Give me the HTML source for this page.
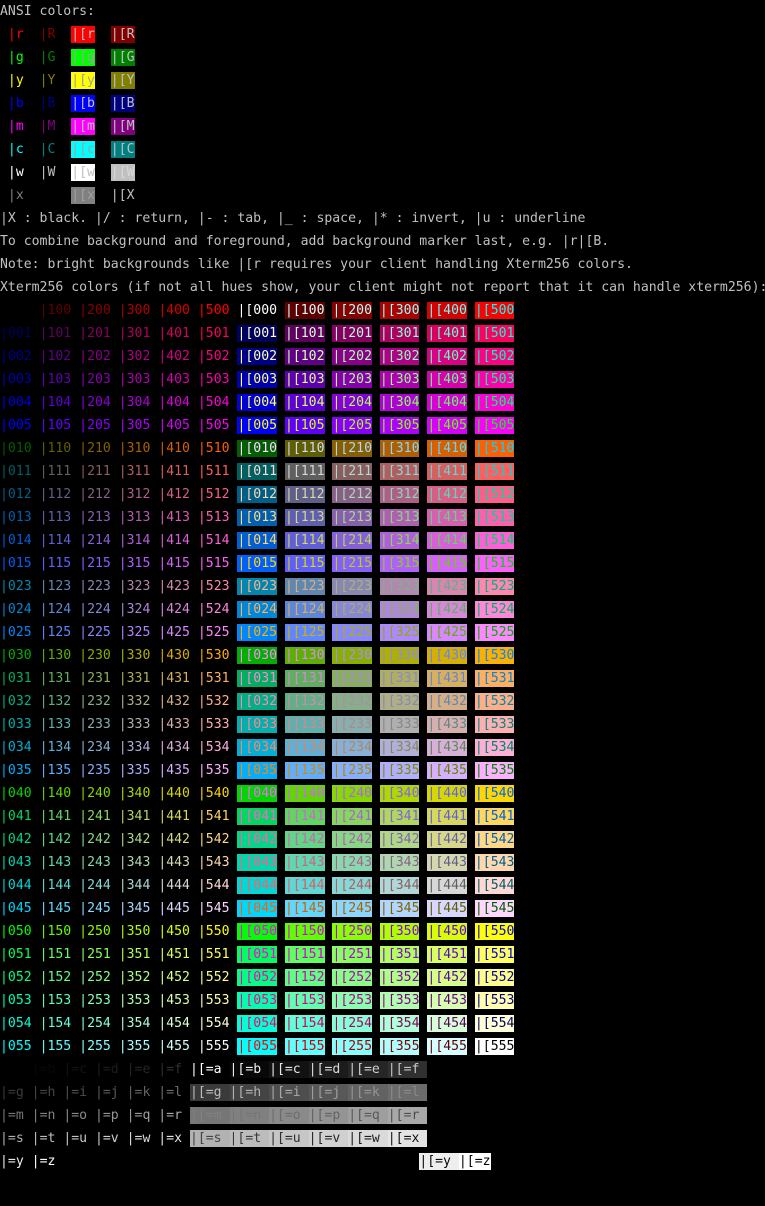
<!DOCTYPE html>
<html><head><meta charset="utf-8"><style>
html,body{margin:0;padding:0;background:#000;}
body{width:765px;height:1206px;overflow:hidden;font-family:"DejaVu Sans Mono","Liberation Mono",monospace;font-size:13.15px;color:#c0c0c0;}
div{height:23px;line-height:23px;white-space:pre;}
i{font-style:normal;}
b{font-weight:normal;display:inline-block;line-height:17px;height:17px;vertical-align:middle;}
</style></head><body>
<div>ANSI colors:</div>
<div> <i style="color:#ff0000">|r</i>  <i style="color:#800000">|R</i>  <b style="background:#ff0000;color:#c0c0c0">|[r</b>  <b style="background:#800000;color:#c0c0c0">|[R</b></div>
<div> <i style="color:#00ff00">|g</i>  <i style="color:#008000">|G</i>  <b style="background:#00ff00;color:#a0a0a0">|[g</b>  <b style="background:#008000;color:#c0c0c0">|[G</b></div>
<div> <i style="color:#ffff00">|y</i>  <i style="color:#808000">|Y</i>  <b style="background:#ffff00;color:#a0a0a0">|[y</b>  <b style="background:#808000;color:#c0c0c0">|[Y</b></div>
<div> <i style="color:#0000ff">|b</i>  <i style="color:#000080">|B</i>  <b style="background:#0000ff;color:#c0c0c0">|[b</b>  <b style="background:#000080;color:#c0c0c0">|[B</b></div>
<div> <i style="color:#ff00ff">|m</i>  <i style="color:#800080">|M</i>  <b style="background:#ff00ff;color:#c0c0c0">|[m</b>  <b style="background:#800080;color:#c0c0c0">|[M</b></div>
<div> <i style="color:#00ffff">|c</i>  <i style="color:#008080">|C</i>  <b style="background:#00ffff;color:#a0a0a0">|[c</b>  <b style="background:#008080;color:#c0c0c0">|[C</b></div>
<div> <i style="color:#ffffff">|w</i>  <i style="color:#c0c0c0">|W</i>  <b style="background:#ffffff;color:#c0c0c0">|[w</b>  <b style="background:#c0c0c0;color:#d8d8d8">|[W</b></div>
<div> <i style="color:#808080">|x</i>      <b style="background:#808080;color:#a0a0a0">|[x</b>  <b style="background:#000000;color:#c0c0c0">|[X</b></div>
<div>|X : black. |/ : return, |- : tab, |_ : space, |* : invert, |u : underline</div>
<div>To combine background and foreground, add background marker last, e.g. |r|[B.</div>
<div>Note: bright backgrounds like |[r requires your client handling Xterm256 colors.</div>
<div>Xterm256 colors (if not all hues show, your client might not report that it can handle xterm256):</div>
<div><i style="color:#000000">|000</i> <i style="color:#5f0000">|100</i> <i style="color:#870000">|200</i> <i style="color:#af0000">|300</i> <i style="color:#d70000">|400</i> <i style="color:#ff0000">|500</i> <b style="background:#000000;color:#ffffff">|[000</b> <b style="background:#5f0000;color:#d7ffff">|[100</b> <b style="background:#870000;color:#afffff">|[200</b> <b style="background:#af0000;color:#87ffff">|[300</b> <b style="background:#d70000;color:#5fffff">|[400</b> <b style="background:#ff0000;color:#00ffff">|[500</b></div>
<div><i style="color:#00005f">|001</i> <i style="color:#5f005f">|101</i> <i style="color:#87005f">|201</i> <i style="color:#af005f">|301</i> <i style="color:#d7005f">|401</i> <i style="color:#ff005f">|501</i> <b style="background:#00005f;color:#ffffd7">|[001</b> <b style="background:#5f005f;color:#d7ffd7">|[101</b> <b style="background:#87005f;color:#afffd7">|[201</b> <b style="background:#af005f;color:#87ffd7">|[301</b> <b style="background:#d7005f;color:#5fffd7">|[401</b> <b style="background:#ff005f;color:#00ffd7">|[501</b></div>
<div><i style="color:#000087">|002</i> <i style="color:#5f0087">|102</i> <i style="color:#870087">|202</i> <i style="color:#af0087">|302</i> <i style="color:#d70087">|402</i> <i style="color:#ff0087">|502</i> <b style="background:#000087;color:#ffffaf">|[002</b> <b style="background:#5f0087;color:#d7ffaf">|[102</b> <b style="background:#870087;color:#afffaf">|[202</b> <b style="background:#af0087;color:#87ffaf">|[302</b> <b style="background:#d70087;color:#5fffaf">|[402</b> <b style="background:#ff0087;color:#00ffaf">|[502</b></div>
<div><i style="color:#0000af">|003</i> <i style="color:#5f00af">|103</i> <i style="color:#8700af">|203</i> <i style="color:#af00af">|303</i> <i style="color:#d700af">|403</i> <i style="color:#ff00af">|503</i> <b style="background:#0000af;color:#ffff87">|[003</b> <b style="background:#5f00af;color:#d7ff87">|[103</b> <b style="background:#8700af;color:#afff87">|[203</b> <b style="background:#af00af;color:#87ff87">|[303</b> <b style="background:#d700af;color:#5fff87">|[403</b> <b style="background:#ff00af;color:#00ff87">|[503</b></div>
<div><i style="color:#0000d7">|004</i> <i style="color:#5f00d7">|104</i> <i style="color:#8700d7">|204</i> <i style="color:#af00d7">|304</i> <i style="color:#d700d7">|404</i> <i style="color:#ff00d7">|504</i> <b style="background:#0000d7;color:#ffff5f">|[004</b> <b style="background:#5f00d7;color:#d7ff5f">|[104</b> <b style="background:#8700d7;color:#afff5f">|[204</b> <b style="background:#af00d7;color:#87ff5f">|[304</b> <b style="background:#d700d7;color:#5fff5f">|[404</b> <b style="background:#ff00d7;color:#00ff5f">|[504</b></div>
<div><i style="color:#0000ff">|005</i> <i style="color:#5f00ff">|105</i> <i style="color:#8700ff">|205</i> <i style="color:#af00ff">|305</i> <i style="color:#d700ff">|405</i> <i style="color:#ff00ff">|505</i> <b style="background:#0000ff;color:#ffff00">|[005</b> <b style="background:#5f00ff;color:#d7ff00">|[105</b> <b style="background:#8700ff;color:#afff00">|[205</b> <b style="background:#af00ff;color:#87ff00">|[305</b> <b style="background:#d700ff;color:#5fff00">|[405</b> <b style="background:#ff00ff;color:#00ff00">|[505</b></div>
<div><i style="color:#005f00">|010</i> <i style="color:#5f5f00">|110</i> <i style="color:#875f00">|210</i> <i style="color:#af5f00">|310</i> <i style="color:#d75f00">|410</i> <i style="color:#ff5f00">|510</i> <b style="background:#005f00;color:#ffd7ff">|[010</b> <b style="background:#5f5f00;color:#d7d7ff">|[110</b> <b style="background:#875f00;color:#afd7ff">|[210</b> <b style="background:#af5f00;color:#87d7ff">|[310</b> <b style="background:#d75f00;color:#5fd7ff">|[410</b> <b style="background:#ff5f00;color:#00d7ff">|[510</b></div>
<div><i style="color:#005f5f">|011</i> <i style="color:#5f5f5f">|111</i> <i style="color:#875f5f">|211</i> <i style="color:#af5f5f">|311</i> <i style="color:#d75f5f">|411</i> <i style="color:#ff5f5f">|511</i> <b style="background:#005f5f;color:#ffd7d7">|[011</b> <b style="background:#5f5f5f;color:#d7d7d7">|[111</b> <b style="background:#875f5f;color:#afd7d7">|[211</b> <b style="background:#af5f5f;color:#87d7d7">|[311</b> <b style="background:#d75f5f;color:#5fd7d7">|[411</b> <b style="background:#ff5f5f;color:#00d7d7">|[511</b></div>
<div><i style="color:#005f87">|012</i> <i style="color:#5f5f87">|112</i> <i style="color:#875f87">|212</i> <i style="color:#af5f87">|312</i> <i style="color:#d75f87">|412</i> <i style="color:#ff5f87">|512</i> <b style="background:#005f87;color:#ffd7af">|[012</b> <b style="background:#5f5f87;color:#d7d7af">|[112</b> <b style="background:#875f87;color:#afd7af">|[212</b> <b style="background:#af5f87;color:#87d7af">|[312</b> <b style="background:#d75f87;color:#5fd7af">|[412</b> <b style="background:#ff5f87;color:#00d7af">|[512</b></div>
<div><i style="color:#005faf">|013</i> <i style="color:#5f5faf">|113</i> <i style="color:#875faf">|213</i> <i style="color:#af5faf">|313</i> <i style="color:#d75faf">|413</i> <i style="color:#ff5faf">|513</i> <b style="background:#005faf;color:#ffd787">|[013</b> <b style="background:#5f5faf;color:#d7d787">|[113</b> <b style="background:#875faf;color:#afd787">|[213</b> <b style="background:#af5faf;color:#87d787">|[313</b> <b style="background:#d75faf;color:#5fd787">|[413</b> <b style="background:#ff5faf;color:#00d787">|[513</b></div>
<div><i style="color:#005fd7">|014</i> <i style="color:#5f5fd7">|114</i> <i style="color:#875fd7">|214</i> <i style="color:#af5fd7">|314</i> <i style="color:#d75fd7">|414</i> <i style="color:#ff5fd7">|514</i> <b style="background:#005fd7;color:#ffd75f">|[014</b> <b style="background:#5f5fd7;color:#d7d75f">|[114</b> <b style="background:#875fd7;color:#afd75f">|[214</b> <b style="background:#af5fd7;color:#87d75f">|[314</b> <b style="background:#d75fd7;color:#5fd75f">|[414</b> <b style="background:#ff5fd7;color:#00d75f">|[514</b></div>
<div><i style="color:#005fff">|015</i> <i style="color:#5f5fff">|115</i> <i style="color:#875fff">|215</i> <i style="color:#af5fff">|315</i> <i style="color:#d75fff">|415</i> <i style="color:#ff5fff">|515</i> <b style="background:#005fff;color:#ffd700">|[015</b> <b style="background:#5f5fff;color:#d7d700">|[115</b> <b style="background:#875fff;color:#afd700">|[215</b> <b style="background:#af5fff;color:#87d700">|[315</b> <b style="background:#d75fff;color:#5fd700">|[415</b> <b style="background:#ff5fff;color:#00d700">|[515</b></div>
<div><i style="color:#0087af">|023</i> <i style="color:#5f87af">|123</i> <i style="color:#8787af">|223</i> <i style="color:#af87af">|323</i> <i style="color:#d787af">|423</i> <i style="color:#ff87af">|523</i> <b style="background:#0087af;color:#ffaf87">|[023</b> <b style="background:#5f87af;color:#d7af87">|[123</b> <b style="background:#8787af;color:#afaf87">|[223</b> <b style="background:#af87af;color:#87af87">|[323</b> <b style="background:#d787af;color:#5faf87">|[423</b> <b style="background:#ff87af;color:#00af87">|[523</b></div>
<div><i style="color:#0087d7">|024</i> <i style="color:#5f87d7">|124</i> <i style="color:#8787d7">|224</i> <i style="color:#af87d7">|324</i> <i style="color:#d787d7">|424</i> <i style="color:#ff87d7">|524</i> <b style="background:#0087d7;color:#ffaf5f">|[024</b> <b style="background:#5f87d7;color:#d7af5f">|[124</b> <b style="background:#8787d7;color:#afaf5f">|[224</b> <b style="background:#af87d7;color:#87af5f">|[324</b> <b style="background:#d787d7;color:#5faf5f">|[424</b> <b style="background:#ff87d7;color:#00af5f">|[524</b></div>
<div><i style="color:#0087ff">|025</i> <i style="color:#5f87ff">|125</i> <i style="color:#8787ff">|225</i> <i style="color:#af87ff">|325</i> <i style="color:#d787ff">|425</i> <i style="color:#ff87ff">|525</i> <b style="background:#0087ff;color:#ffaf00">|[025</b> <b style="background:#5f87ff;color:#d7af00">|[125</b> <b style="background:#8787ff;color:#afaf00">|[225</b> <b style="background:#af87ff;color:#87af00">|[325</b> <b style="background:#d787ff;color:#5faf00">|[425</b> <b style="background:#ff87ff;color:#00af00">|[525</b></div>
<div><i style="color:#00af00">|030</i> <i style="color:#5faf00">|130</i> <i style="color:#87af00">|230</i> <i style="color:#afaf00">|330</i> <i style="color:#d7af00">|430</i> <i style="color:#ffaf00">|530</i> <b style="background:#00af00;color:#ff87ff">|[030</b> <b style="background:#5faf00;color:#d787ff">|[130</b> <b style="background:#87af00;color:#af87ff">|[230</b> <b style="background:#afaf00;color:#8787ff">|[330</b> <b style="background:#d7af00;color:#5f87ff">|[430</b> <b style="background:#ffaf00;color:#0087ff">|[530</b></div>
<div><i style="color:#00af5f">|031</i> <i style="color:#5faf5f">|131</i> <i style="color:#87af5f">|231</i> <i style="color:#afaf5f">|331</i> <i style="color:#d7af5f">|431</i> <i style="color:#ffaf5f">|531</i> <b style="background:#00af5f;color:#ff87d7">|[031</b> <b style="background:#5faf5f;color:#d787d7">|[131</b> <b style="background:#87af5f;color:#af87d7">|[231</b> <b style="background:#afaf5f;color:#8787d7">|[331</b> <b style="background:#d7af5f;color:#5f87d7">|[431</b> <b style="background:#ffaf5f;color:#0087d7">|[531</b></div>
<div><i style="color:#00af87">|032</i> <i style="color:#5faf87">|132</i> <i style="color:#87af87">|232</i> <i style="color:#afaf87">|332</i> <i style="color:#d7af87">|432</i> <i style="color:#ffaf87">|532</i> <b style="background:#00af87;color:#ff87af">|[032</b> <b style="background:#5faf87;color:#d787af">|[132</b> <b style="background:#87af87;color:#af87af">|[232</b> <b style="background:#afaf87;color:#8787af">|[332</b> <b style="background:#d7af87;color:#5f87af">|[432</b> <b style="background:#ffaf87;color:#0087af">|[532</b></div>
<div><i style="color:#00afaf">|033</i> <i style="color:#5fafaf">|133</i> <i style="color:#87afaf">|233</i> <i style="color:#afafaf">|333</i> <i style="color:#d7afaf">|433</i> <i style="color:#ffafaf">|533</i> <b style="background:#00afaf;color:#ff8787">|[033</b> <b style="background:#5fafaf;color:#d78787">|[133</b> <b style="background:#87afaf;color:#af8787">|[233</b> <b style="background:#afafaf;color:#878787">|[333</b> <b style="background:#d7afaf;color:#5f8787">|[433</b> <b style="background:#ffafaf;color:#008787">|[533</b></div>
<div><i style="color:#00afd7">|034</i> <i style="color:#5fafd7">|134</i> <i style="color:#87afd7">|234</i> <i style="color:#afafd7">|334</i> <i style="color:#d7afd7">|434</i> <i style="color:#ffafd7">|534</i> <b style="background:#00afd7;color:#ff875f">|[034</b> <b style="background:#5fafd7;color:#d7875f">|[134</b> <b style="background:#87afd7;color:#af875f">|[234</b> <b style="background:#afafd7;color:#87875f">|[334</b> <b style="background:#d7afd7;color:#5f875f">|[434</b> <b style="background:#ffafd7;color:#00875f">|[534</b></div>
<div><i style="color:#00afff">|035</i> <i style="color:#5fafff">|135</i> <i style="color:#87afff">|235</i> <i style="color:#afafff">|335</i> <i style="color:#d7afff">|435</i> <i style="color:#ffafff">|535</i> <b style="background:#00afff;color:#ff8700">|[035</b> <b style="background:#5fafff;color:#d78700">|[135</b> <b style="background:#87afff;color:#af8700">|[235</b> <b style="background:#afafff;color:#878700">|[335</b> <b style="background:#d7afff;color:#5f8700">|[435</b> <b style="background:#ffafff;color:#008700">|[535</b></div>
<div><i style="color:#00d700">|040</i> <i style="color:#5fd700">|140</i> <i style="color:#87d700">|240</i> <i style="color:#afd700">|340</i> <i style="color:#d7d700">|440</i> <i style="color:#ffd700">|540</i> <b style="background:#00d700;color:#ff5fff">|[040</b> <b style="background:#5fd700;color:#d75fff">|[140</b> <b style="background:#87d700;color:#af5fff">|[240</b> <b style="background:#afd700;color:#875fff">|[340</b> <b style="background:#d7d700;color:#5f5fff">|[440</b> <b style="background:#ffd700;color:#005fff">|[540</b></div>
<div><i style="color:#00d75f">|041</i> <i style="color:#5fd75f">|141</i> <i style="color:#87d75f">|241</i> <i style="color:#afd75f">|341</i> <i style="color:#d7d75f">|441</i> <i style="color:#ffd75f">|541</i> <b style="background:#00d75f;color:#ff5fd7">|[041</b> <b style="background:#5fd75f;color:#d75fd7">|[141</b> <b style="background:#87d75f;color:#af5fd7">|[241</b> <b style="background:#afd75f;color:#875fd7">|[341</b> <b style="background:#d7d75f;color:#5f5fd7">|[441</b> <b style="background:#ffd75f;color:#005fd7">|[541</b></div>
<div><i style="color:#00d787">|042</i> <i style="color:#5fd787">|142</i> <i style="color:#87d787">|242</i> <i style="color:#afd787">|342</i> <i style="color:#d7d787">|442</i> <i style="color:#ffd787">|542</i> <b style="background:#00d787;color:#ff5faf">|[042</b> <b style="background:#5fd787;color:#d75faf">|[142</b> <b style="background:#87d787;color:#af5faf">|[242</b> <b style="background:#afd787;color:#875faf">|[342</b> <b style="background:#d7d787;color:#5f5faf">|[442</b> <b style="background:#ffd787;color:#005faf">|[542</b></div>
<div><i style="color:#00d7af">|043</i> <i style="color:#5fd7af">|143</i> <i style="color:#87d7af">|243</i> <i style="color:#afd7af">|343</i> <i style="color:#d7d7af">|443</i> <i style="color:#ffd7af">|543</i> <b style="background:#00d7af;color:#ff5f87">|[043</b> <b style="background:#5fd7af;color:#d75f87">|[143</b> <b style="background:#87d7af;color:#af5f87">|[243</b> <b style="background:#afd7af;color:#875f87">|[343</b> <b style="background:#d7d7af;color:#5f5f87">|[443</b> <b style="background:#ffd7af;color:#005f87">|[543</b></div>
<div><i style="color:#00d7d7">|044</i> <i style="color:#5fd7d7">|144</i> <i style="color:#87d7d7">|244</i> <i style="color:#afd7d7">|344</i> <i style="color:#d7d7d7">|444</i> <i style="color:#ffd7d7">|544</i> <b style="background:#00d7d7;color:#ff5f5f">|[044</b> <b style="background:#5fd7d7;color:#d75f5f">|[144</b> <b style="background:#87d7d7;color:#af5f5f">|[244</b> <b style="background:#afd7d7;color:#875f5f">|[344</b> <b style="background:#d7d7d7;color:#5f5f5f">|[444</b> <b style="background:#ffd7d7;color:#005f5f">|[544</b></div>
<div><i style="color:#00d7ff">|045</i> <i style="color:#5fd7ff">|145</i> <i style="color:#87d7ff">|245</i> <i style="color:#afd7ff">|345</i> <i style="color:#d7d7ff">|445</i> <i style="color:#ffd7ff">|545</i> <b style="background:#00d7ff;color:#ff5f00">|[045</b> <b style="background:#5fd7ff;color:#d75f00">|[145</b> <b style="background:#87d7ff;color:#af5f00">|[245</b> <b style="background:#afd7ff;color:#875f00">|[345</b> <b style="background:#d7d7ff;color:#5f5f00">|[445</b> <b style="background:#ffd7ff;color:#005f00">|[545</b></div>
<div><i style="color:#00ff00">|050</i> <i style="color:#5fff00">|150</i> <i style="color:#87ff00">|250</i> <i style="color:#afff00">|350</i> <i style="color:#d7ff00">|450</i> <i style="color:#ffff00">|550</i> <b style="background:#00ff00;color:#ff00ff">|[050</b> <b style="background:#5fff00;color:#d700ff">|[150</b> <b style="background:#87ff00;color:#af00ff">|[250</b> <b style="background:#afff00;color:#8700ff">|[350</b> <b style="background:#d7ff00;color:#5f00ff">|[450</b> <b style="background:#ffff00;color:#0000ff">|[550</b></div>
<div><i style="color:#00ff5f">|051</i> <i style="color:#5fff5f">|151</i> <i style="color:#87ff5f">|251</i> <i style="color:#afff5f">|351</i> <i style="color:#d7ff5f">|451</i> <i style="color:#ffff5f">|551</i> <b style="background:#00ff5f;color:#ff00d7">|[051</b> <b style="background:#5fff5f;color:#d700d7">|[151</b> <b style="background:#87ff5f;color:#af00d7">|[251</b> <b style="background:#afff5f;color:#8700d7">|[351</b> <b style="background:#d7ff5f;color:#5f00d7">|[451</b> <b style="background:#ffff5f;color:#0000d7">|[551</b></div>
<div><i style="color:#00ff87">|052</i> <i style="color:#5fff87">|152</i> <i style="color:#87ff87">|252</i> <i style="color:#afff87">|352</i> <i style="color:#d7ff87">|452</i> <i style="color:#ffff87">|552</i> <b style="background:#00ff87;color:#ff00af">|[052</b> <b style="background:#5fff87;color:#d700af">|[152</b> <b style="background:#87ff87;color:#af00af">|[252</b> <b style="background:#afff87;color:#8700af">|[352</b> <b style="background:#d7ff87;color:#5f00af">|[452</b> <b style="background:#ffff87;color:#0000af">|[552</b></div>
<div><i style="color:#00ffaf">|053</i> <i style="color:#5fffaf">|153</i> <i style="color:#87ffaf">|253</i> <i style="color:#afffaf">|353</i> <i style="color:#d7ffaf">|453</i> <i style="color:#ffffaf">|553</i> <b style="background:#00ffaf;color:#ff0087">|[053</b> <b style="background:#5fffaf;color:#d70087">|[153</b> <b style="background:#87ffaf;color:#af0087">|[253</b> <b style="background:#afffaf;color:#870087">|[353</b> <b style="background:#d7ffaf;color:#5f0087">|[453</b> <b style="background:#ffffaf;color:#000087">|[553</b></div>
<div><i style="color:#00ffd7">|054</i> <i style="color:#5fffd7">|154</i> <i style="color:#87ffd7">|254</i> <i style="color:#afffd7">|354</i> <i style="color:#d7ffd7">|454</i> <i style="color:#ffffd7">|554</i> <b style="background:#00ffd7;color:#ff005f">|[054</b> <b style="background:#5fffd7;color:#d7005f">|[154</b> <b style="background:#87ffd7;color:#af005f">|[254</b> <b style="background:#afffd7;color:#87005f">|[354</b> <b style="background:#d7ffd7;color:#5f005f">|[454</b> <b style="background:#ffffd7;color:#00005f">|[554</b></div>
<div><i style="color:#00ffff">|055</i> <i style="color:#5fffff">|155</i> <i style="color:#87ffff">|255</i> <i style="color:#afffff">|355</i> <i style="color:#d7ffff">|455</i> <i style="color:#ffffff">|555</i> <b style="background:#00ffff;color:#ff0000">|[055</b> <b style="background:#5fffff;color:#d70000">|[155</b> <b style="background:#87ffff;color:#af0000">|[255</b> <b style="background:#afffff;color:#870000">|[355</b> <b style="background:#d7ffff;color:#5f0000">|[455</b> <b style="background:#ffffff;color:#000000">|[555</b></div>
<div><i style="color:#000000">|=a</i> <i style="color:#080808">|=b</i> <i style="color:#121212">|=c</i> <i style="color:#1c1c1c">|=d</i> <i style="color:#262626">|=e</i> <i style="color:#303030">|=f</i> <b style="background:#000000;color:#ffffff">|[=a </b><b style="background:#080808;color:#eeeeee">|[=b </b><b style="background:#121212;color:#e4e4e4">|[=c </b><b style="background:#1c1c1c;color:#dadada">|[=d </b><b style="background:#262626;color:#d0d0d0">|[=e </b><b style="background:#303030;color:#c6c6c6">|[=f </b></div>
<div><i style="color:#3a3a3a">|=g</i> <i style="color:#444444">|=h</i> <i style="color:#4e4e4e">|=i</i> <i style="color:#585858">|=j</i> <i style="color:#626262">|=k</i> <i style="color:#6c6c6c">|=l</i> <b style="background:#3a3a3a;color:#bcbcbc">|[=g </b><b style="background:#444444;color:#b2b2b2">|[=h </b><b style="background:#4e4e4e;color:#a8a8a8">|[=i </b><b style="background:#585858;color:#9e9e9e">|[=j </b><b style="background:#626262;color:#949494">|[=k </b><b style="background:#6c6c6c;color:#8a8a8a">|[=l </b></div>
<div><i style="color:#767676">|=m</i> <i style="color:#808080">|=n</i> <i style="color:#8a8a8a">|=o</i> <i style="color:#949494">|=p</i> <i style="color:#9e9e9e">|=q</i> <i style="color:#a8a8a8">|=r</i> <b style="background:#767676;color:#808080">|[=m </b><b style="background:#808080;color:#767676">|[=n </b><b style="background:#8a8a8a;color:#6c6c6c">|[=o </b><b style="background:#949494;color:#626262">|[=p </b><b style="background:#9e9e9e;color:#585858">|[=q </b><b style="background:#a8a8a8;color:#4e4e4e">|[=r </b></div>
<div><i style="color:#b2b2b2">|=s</i> <i style="color:#bcbcbc">|=t</i> <i style="color:#c6c6c6">|=u</i> <i style="color:#d0d0d0">|=v</i> <i style="color:#dadada">|=w</i> <i style="color:#e4e4e4">|=x</i> <b style="background:#b2b2b2;color:#444444">|[=s </b><b style="background:#bcbcbc;color:#3a3a3a">|[=t </b><b style="background:#c6c6c6;color:#303030">|[=u </b><b style="background:#d0d0d0;color:#262626">|[=v </b><b style="background:#dadada;color:#1c1c1c">|[=w </b><b style="background:#e4e4e4;color:#121212">|[=x </b></div>
<div><i style="color:#eeeeee">|=y</i> <i style="color:#ffffff">|=z</i>                                              <b style="background:#eeeeee;color:#080808">|[=y </b><b style="background:#ffffff;color:#000000">|[=z</b></div>
</body></html>
